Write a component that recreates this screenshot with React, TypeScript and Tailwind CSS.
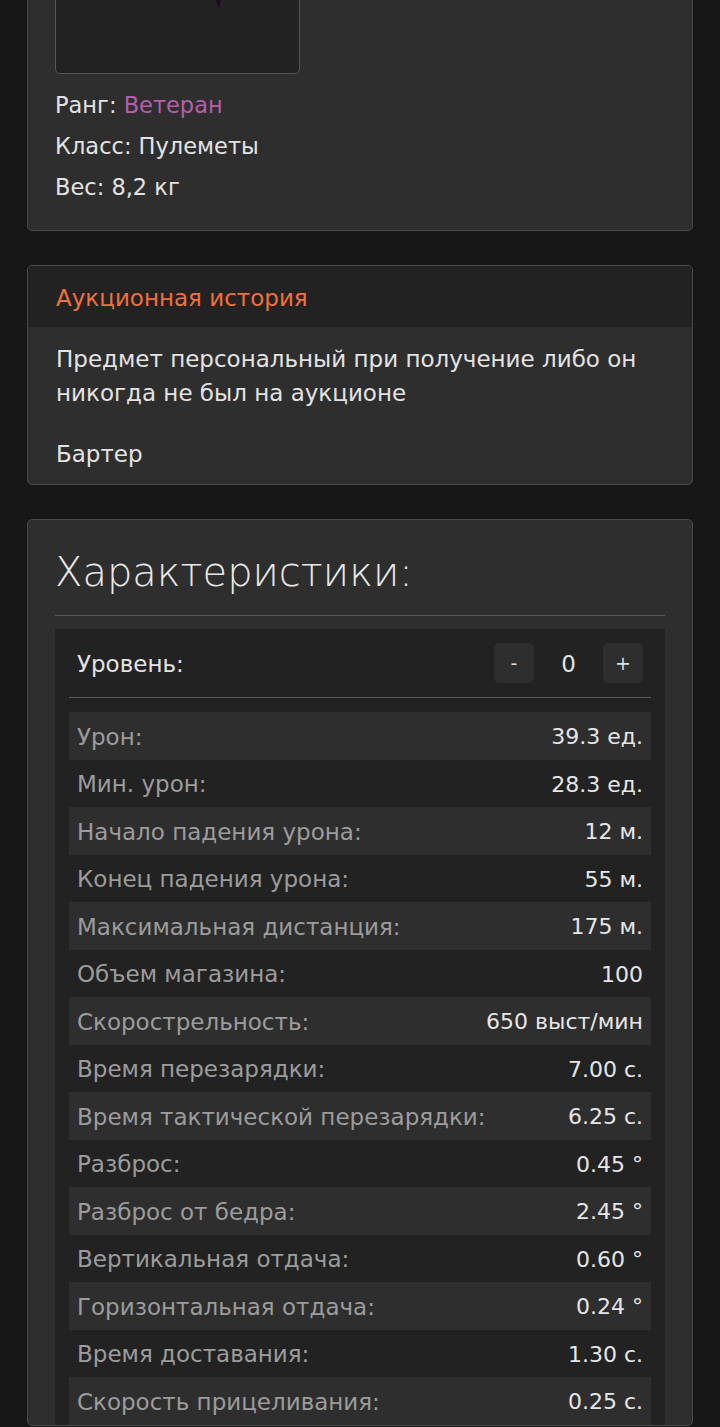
import React from 'react';

const stats: [string, string][] = [
  ['Урон:', '39.3 ед.'],
  ['Мин. урон:', '28.3 ед.'],
  ['Начало падения урона:', '12 м.'],
  ['Конец падения урона:', '55 м.'],
  ['Максимальная дистанция:', '175 м.'],
  ['Объем магазина:', '100'],
  ['Скорострельность:', '650 выст/мин'],
  ['Время перезарядки:', '7.00 с.'],
  ['Время тактической перезарядки:', '6.25 с.'],
  ['Разброс:', '0.45 °'],
  ['Разброс от бедра:', '2.45 °'],
  ['Вертикальная отдача:', '0.60 °'],
  ['Горизонтальная отдача:', '0.24 °'],
  ['Время доставания:', '1.30 с.'],
  ['Скорость прицеливания:', '0.25 с.'],
];

export default function App() {
  return (
    <div
      className="h-[1427px] overflow-hidden bg-[#171717] px-[27px] text-[#e3e3e3]"
      style={{ fontFamily: '"DejaVu Sans", "Noto Sans", sans-serif' }}
    >
      {/* Item card */}
      <div className="mt-[-199px] rounded-[5px] border border-[#4a4a4a] bg-[#2e2e2e] px-[27px] pb-[26px] pt-[27px]">
        <div className="relative h-[245px] w-[245px] overflow-hidden rounded-[5px] border border-[#555] bg-[#222]">
          <svg className="absolute left-[150px] top-[140px]" width="30" height="40" viewBox="0 0 30 40">
            <path d="M4 0 L26 0 L20 30 L13 38 L8 26 Z" fill="#141016" />
            <path d="M13 38 L15 30 L20 30 Z" fill="#2a2030" />
          </svg>
        </div>
        <div className="mt-[15px] flex flex-col gap-[8px] text-[22.5px] leading-[33px]">
          <div>
            Ранг: <span className="text-[#b35fac]">Ветеран</span>
          </div>
          <div>Класс: Пулеметы</div>
          <div>Вес: 8,2 кг</div>
        </div>
      </div>

      {/* Auction history */}
      <div className="mt-[34px] overflow-hidden rounded-[5px] border border-[#4a4a4a] bg-[#2e2e2e]">
        <div className="flex h-[61px] items-center bg-[#222] px-[28px] pt-[3px] text-[23px] text-[#f0703e]">
          Аукционная история
        </div>
        <div className="px-[28px] pb-[13px] pt-[15px] text-[23px] leading-[34px]">
          <p>Предмет персональный при получение либо он никогда не был на аукционе</p>
          <p className="mt-[27px]">Бартер</p>
        </div>
      </div>

      {/* Stats */}
      <div className="mt-[34px] rounded-[5px] border border-[#4a4a4a] bg-[#2e2e2e] px-[27px] pt-[28px]">
        <h2 className="text-[40px] font-light leading-[48px] text-[#e8e8e8]">Характеристики:</h2>
        <div className="mt-[19px] h-px bg-[#5a5a5a]" />
        <div className="mt-[13px] bg-[#222] px-[14px] pt-[14px]">
          <div className="flex h-[40px] items-center justify-between px-[8px] text-[23px]">
            <span className="pt-[2px]">Уровень:</span>
            <div className="flex items-center">
              <button className="h-[40px] w-[40px] rounded-[5px] bg-[#2e2e2e] text-[19px] text-[#ddd]">-</button>
              <span className="w-[69px] pt-[2px] text-center text-[23px]">0</span>
              <button className="h-[40px] w-[40px] rounded-[5px] bg-[#2e2e2e] text-[19px] text-[#ddd]">+</button>
            </div>
          </div>
          <div className="mt-[14px] h-px bg-[#5a5a5a]" />
          <div className="mt-[14px]">
            {stats.map(([label, value], i) => (
              <div
                key={label}
                className={`flex h-[47.5px] items-center justify-between px-[8px] pt-[2px] text-[23px] ${
                  i % 2 === 0 ? 'bg-[#2e2e2e]' : ''
                }`}
              >
                <span className="text-[#9c9c9c]">{label}</span>
                <span className="text-[22px] text-[#e6e6e6]">{value}</span>
              </div>
            ))}
          </div>
        </div>
      </div>
    </div>
  );
}
